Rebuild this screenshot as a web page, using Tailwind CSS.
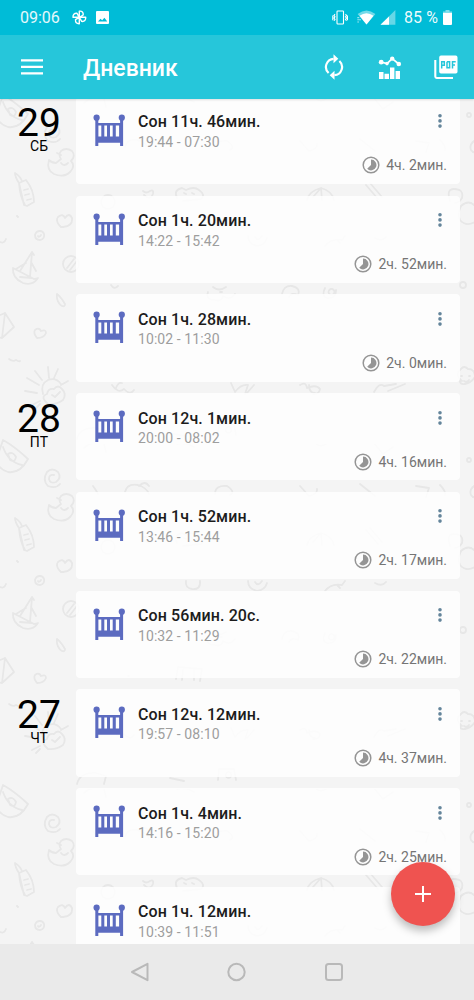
<!DOCTYPE html>
<html lang="ru">
<head>
<meta charset="utf-8">
<title>Дневник</title>
<script src="https://cdn.jsdelivr.net/npm/@tailwindcss/browser@4"></script>
</head>
<body class="w-[474px] h-[1000px] overflow-hidden bg-[#f4f4f4] font-[Roboto,sans-serif]">
<svg width="0" height="0" class="absolute">
  <defs>
    <symbol id="crib" viewBox="0 0 32 33">
      <circle cx="3.6" cy="3.7" r="3.1"/><circle cx="28.8" cy="3.7" r="3.1"/>
      <path fill-rule="evenodd" d="M2.3 5h3v4h21.8V5h3v27h-3v-3.2H5.3V32h-3zM5.4 11.6v10.8h2.9V11.6zM11.3 11.6v10.8h2.7V11.6zM17 11.6v10.8h2.7V11.6zM22.8 11.6v10.8h3.3V11.6z"/>
    </symbol>
    <symbol id="clock" viewBox="0 0 18 18">
      <circle cx="9" cy="9" r="7.8" fill="none" stroke="currentColor" stroke-width="1.5"/>
      <path d="M9 3.6A5.4 5.4 0 1 1 5.2 12.8L9 9z" fill="currentColor"/>
    </symbol>
    <symbol id="dots" viewBox="0 0 4 16"><circle cx="2" cy="2.7" r="1.8"/><circle cx="2" cy="7.9" r="1.8"/><circle cx="2" cy="13.1" r="1.8"/></symbol>
    <pattern id="doodles" width="474" height="345" patternUnits="userSpaceOnUse">
      <g fill="none" stroke="#e7e7e7" stroke-width="1.8" stroke-linecap="round" stroke-linejoin="round">
        <!-- diaper -->
        <path d="M-4 17L3 -4Q14 2 28 15Q20 30 8 28Q0 26 -4 17zM3 3Q8 18 22 21M8 10q5-3 8 3q-1 6-6 3z"/>
        <path d="M-4 362L3 341Q14 347 28 360"/>
        <!-- snail curl -->
        <path d="M54 31q-5-1-5 4q1 5 7 3q6-4 2-10q-6-5-11 0q-5 8 1 14q8 3 12-2"/>
        <!-- duck -->
        <path d="M49 61q-3 10 5 14q10 4 16-2q6-6 1-11q5-5 1-10q-6-4-11 0q-3 4 0 8l-5 4q-4 0-7-3zM61 64q3 4 7 0M57 54l4 2"/>
        <!-- bottle -->
        <path d="M19 84l7-3q8 10 8 22l-7 4l-3-1zM19 84q-4-6-4-10q5 3 7 8M19 84q1 14 6 22M24 91l4-1M25 96l4-1M27 101l4-1"/>
        <!-- heart, dot, spiral -->
        <path d="M61 128q-6-6-3-10q5-4 7 1q4-6 7 0q1 8-9 9zM17 117l1 1M40 132q-4 0-5 4q0 5 5 5q5-1 4-6q-1-3-4-3zm-2 5q1 2 3-1M0 143q4 2 6-3"/>
        <!-- boat -->
        <path d="M13 169q-1 10 10 15q10 3 15-5l-4 1l-21-11zM20 172L32 153l-2 25M16 170q8-5 10-6M31 163l5 9M32 153l2 3M20 178l12 1"/>
        <circle cx="71" cy="165" r="8"/><path d="M67 169l7-9M70 171l7-9"/>
        <path d="M57 195q4 3 8 10q0 3-3 2q-6-4-5-12zM-2 217l7-3l9 14l-12 11l-6-1M5 214l-3 25"/>
        <path d="M37 239q-4-5-2-8q4-3 6 1q5-2 5 2q-2 5-9 5zM9 260q4 3 7 1q3 2 4 1"/>
        <!-- sun and cloud -->
        <path d="M43 295q-3-10 5-14q8-3 13 4M25 292l12 2M27 279l12 7M35 272l7 9M48 268l1 11M58 270l-4 9M68 282l-7 4M32 306l8-4M36 309l4-4"/>
        <path d="M45 302q-4-5 2-7q1-6 7-5q4-5 8 0q5 5 1 11q-7 5-15 4zM52 296l3 2l5-5"/>
        <!-- animals and toys across the middle -->
        <circle cx="108" cy="103" r="7"/><path d="M143 92q3 3 7 0q4-2 3 3q-3 7-9 1M177 99q-4-8 5-10l4 2q8-4 13 0q7 5 2 9l-18 2M184 94l2 1M192 94l2 1"/>
        <path d="M307 101q2-9 14-12q11 3 13 12M313 98l8-9l1 12M366 86l12 14M370 84l12 14M450 102q-4-12 4-12q10 0 8 9q-3 5-7 5M461 107q8-7 14 0v16q-9 5-15-2q-3-6 1-14z"/>
        <path d="M111 186q3 5 7 1M208 193q-3 8 7 8q7 2 8-4q7 5 12-2M213 188q6 5 13 0M220 193h2M282 195q2-9 10-8q9 2 6 9q-7-3-9 2M325 189q-4 8 2 10q9 1 9-8M331 190a3 3 0 1 0 1 0"/>
        <path d="M112 286q6 9 12 4q6 7 10 1M116 289q2-6 6-5M231 284l4 9q6-8 13-7l-3 9M254 286l-7 8M300 286q6-4 7 3q9-4 13 1q-1 6-7 5M309 286q0 8 6 8M374 293q5-10 10-6l12-2M388 292l17-7"/>
        <path d="M462 282q-8-7-1-12q3-4 7 0q7 0 7 8q-4 6-10 7q-6 1-5-5M461 277h1M469 277h1M464 282q3 2 5-1"/>
        <circle cx="463" cy="186" r="3"/><circle cx="469" cy="16" r="2"/><path d="M474 42q-5 4-3 9q2 3 4 2M84 4q8-8 20-4l2 8M177 0q9-2 17 3M312 -5q7 11 15 4M373 -2l10 12l10-7"/>
        <path d="M93 42q3 4 5 8M125 48q2-9 13-7q9 3 11 9M139 42q6-6 10 0M215 50q0-9 12-8q9 6 3 9M300 42l9 10q9-2 8-7M360 40l15 12M416 42l13 2l-3 9M440 41q6 6 5 10"/>
        <path d="M186 137q-1 7 6 8q9 1 8-8M248 137q0 8 9 10q8-1 10-8M255 138q3 5 7-1M325 147q6-8 17-6l3-4M337 141l3 3M375 139q7 4 11-1"/>
        <path d="M176 235l2-12l24 2l-2 12M183 226l-1 10M194 226v10M128 232h1M218 336l1-11h15l2 11M228 328a3 3 0 1 0 1 0M170 334l14 3"/>
        <path d="M77 340q3-12 19-11l10 3l-2 8"/>
      </g>
    </pattern>
  </defs>
</svg>

<div class="relative flex h-[1000px] flex-col">
  <header class="relative z-20 h-[98.5px] shrink-0 bg-[#26c6da] text-white shadow-[0_1px_2px_rgba(0,0,0,0.12)]">
    <div class="flex h-[34.5px] items-center bg-[#00bcd7] pl-5 pr-5">
      <span class="w-[51px] pt-[2px] text-base leading-none text-white/90">09:06</span>
      <svg class="ml-px" width="15" height="15" viewBox="0 0 15 15" fill="none" stroke="#fff" stroke-width="1.4" stroke-linejoin="round"><path d="M7.3 7.3V1.2Q11.6.8 11.2 5L7.3 7.3M7.3 7.3h6.4q.3 4.5-4 4.1L7.3 7.3M7.3 7.3v6.4Q3.2 13.9 3.5 9.6l3.8-2.3M7.3 7.3H1Q.8 3 5 3.3l2.3 4"/></svg>
      <svg class="ml-[9px]" width="13" height="13" viewBox="0 0 13 13"><path fill="#fff" fill-rule="evenodd" d="M1 0h11q1 0 1 1v11q0 1-1 1H1q-1 0-1-1V1q0-1 1-1zM2 10.5h9.3L8.4 6.7 6.2 9.3 4.5 7.7z"/></svg>
      <div class="flex-1"></div>
      <svg width="16" height="15" viewBox="0 0 16 15" fill="none" stroke="#fff" stroke-width="1.1"><rect x="5" y="1" width="6.5" height="13" rx=".7"/><path d="M3 4.2L2 5.5l1 1.3L2 8.1l1 1.3-1 1.4M.8 5.5v4.8M13.5 4.2l1 1.3-1 1.3 1 1.3-1 1.3 1 1.4M15.5 5.5v4.8"/></svg>
      <svg class="ml-[9px]" width="19" height="15" viewBox="0 0 19 15" fill="#fff"><path opacity=".45" d="M.6 4Q9.5-3 18.4 4L9.5 14.5z"/><path d="M2.5 5.8Q9.5.5 16.5 5.8L9.5 14.5z"/><path d="M.3 7h2v1.2h-2zM.3 9.2H4v1H.3zM.3 11.4H2v1.2H.3z" opacity=".6"/></svg>
      <svg class="ml-[4px]" width="16" height="15" viewBox="0 0 16 15" fill="#fff"><path opacity=".4" d="M15.4 0v14.7H.5z"/><path d="M9 6.4v8.3H.5z"/></svg>
      <span class="ml-[8px] w-[36px] whitespace-nowrap pt-[2px] text-base leading-none tracking-[0.1px] text-white/95">85 %</span>
      <svg class="ml-[3px] mr-[2px]" width="9" height="15" viewBox="0 0 9 15" fill="#fff"><path opacity=".5" d="M2.5 0h4v1.5H9V4H0V1.5h2.5z"/><path d="M0 3h9v11q0 1-1 1H1q-1 0-1-1z"/></svg>
    </div>
    <div class="flex h-[64px] items-center pl-[21px] pr-[16px]">
      <svg class="mt-px" width="22" height="16" viewBox="0 0 22 16" fill="#fff"><path d="M0 .3h22v2.1H0zM0 6.8h22v2.1H0zM0 13.3h22v2.1H0z"/></svg>
      <h1 class="ml-[40px] flex-1 pt-[4px] text-[23px] font-medium leading-none">Дневник</h1>
      <svg class="mt-px" width="20" height="26" viewBox="0 0 20 26"><path fill="none" stroke="#fff" stroke-width="2.2" d="M4.6 19A8.2 8.2 0 0 1 9.6 4.8M15.4 7A8.2 8.2 0 0 1 10.4 21.2"/><path fill="#fff" d="M9.5.3v9l4.8-4.5zM10.5 16.7v9l-4.8-4.5z"/></svg>
      <svg class="ml-[34px] mt-px" width="24" height="25" viewBox="0 0 24 25" fill="#fff"><path d="M1 17h4.5v7H1zM6.5 18.8h4.5v5.2H6.5zM12 12.5h4.4V24H12zM17.6 16h4.4v8h-4.4z"/><circle cx="3.2" cy="7.2" r="2.4"/><circle cx="9" cy="8.6" r="1.8"/><circle cx="14.2" cy="3.6" r="2.2"/><circle cx="20.8" cy="9" r="2.3"/><path fill="none" stroke="#fff" stroke-width="1.7" d="M3.2 7.2L9 8.6l5.2-5L20.8 9"/></svg>
      <svg class="ml-[32px] mt-px" width="24" height="25" viewBox="0 0 24 25"><path fill="#fff" fill-rule="evenodd" d="M7 .6h14.7q1.8 0 1.8 1.8v14.3q0 1.8-1.8 1.8H7q-1.8 0-1.8-1.8V2.4Q5.2.6 7 .6z"/><path fill="none" stroke="#fff" stroke-width="2.1" d="M1.3 5v16.6q0 1.4 1.4 1.4H19"/><path fill="none" stroke="#26c6da" stroke-width="1.5" d="M7.7 13.5V6.8h2.6v3.4H7.7M13 6.8v5.9h2.6V6.8H13M18.5 13.5V6.8h3.2M18.5 10h2.5"/></svg>
    </div>
  </header>

  <main class="relative flex-1 overflow-hidden">
    <svg class="absolute inset-0" width="474" height="846"><rect width="474" height="846" fill="url(#doodles)"/></svg>
    <div id="list" class="relative -mt-[1.6px] flex flex-col gap-[11.45px]"></div>
  </main>

  <nav class="z-10 flex h-[56px] shrink-0 items-center bg-[#eaeaea] px-[130px] text-[#b9b9b9]">
    <svg width="20" height="20" viewBox="0 0 20 20" fill="none" stroke="currentColor" stroke-width="2" stroke-linejoin="round"><path d="M17.5 1.8v16.4L2 10z"/></svg>
    <svg class="ml-[77px]" width="20" height="20" viewBox="0 0 20 20" fill="none" stroke="currentColor" stroke-width="2"><circle cx="9.5" cy="10" r="8.2"/></svg>
    <svg class="ml-[77px]" width="20" height="20" viewBox="0 0 20 20" fill="none" stroke="currentColor" stroke-width="2"><rect x="2" y="2" width="16" height="16" rx="2.5"/></svg>
  </nav>

  <button class="absolute left-[391px] top-[862px] z-20 flex h-16 w-16 items-center justify-center rounded-full bg-[#ef5350] shadow-[0_5px_8px_rgba(0,0,0,0.26)]">
    <svg width="18" height="18" viewBox="0 0 18 18"><path stroke="#fff" stroke-width="2" d="M9 1v16M1 9h16"/></svg>
  </button>
</div>

<template id="group">
  <section class="flex">
    <div class="flex w-[76px] flex-col items-center pl-[2px] pt-[10px]">
      <span data-day class="text-[39px] leading-[33px] text-black"></span>
      <span data-week class="-mt-px text-sm leading-[14px] text-black"></span>
    </div>
    <div data-cards class="flex flex-col gap-[11.45px]"></div>
  </section>
</template>
<template id="card">
  <article class="relative flex h-[87.3px] w-[384px] rounded-[4px] bg-white/85 pl-[17px] shadow-[0_0_1px_rgba(0,0,0,0.03)]">
    <svg class="mt-[17px] text-[#5c6bc0]" width="32" height="33" fill="currentColor"><use href="#crib"/></svg>
    <div class="ml-[13px] flex-1 pt-[15.5px]">
      <h2 data-title class="text-base font-medium leading-[20px] tracking-[0.1px] text-[#1c1c1c]"></h2>
      <p data-time class="mt-[0.5px] text-sm leading-[18px] tracking-[0.08px] text-[#9e9e9e]"></p>
    </div>
    <div class="flex w-[140px] flex-col items-end pr-[13px]">
      <svg class="mr-[5px] mt-[16.5px] text-[#64859b]" width="4" height="16" fill="currentColor"><use href="#dots"/></svg>
      <div class="mt-[27px] flex items-center gap-[6px]">
        <svg class="text-[#959595]" width="18" height="18"><use href="#clock"/></svg>
        <span data-gap class="text-sm leading-[18px] text-[#757575]"></span>
      </div>
    </div>
  </article>
</template>
<script>
const days = [
  ["29","СБ",[["Сон 11ч. 46мин.","19:44 - 07:30","4ч. 2мин."],["Сон 1ч. 20мин.","14:22 - 15:42","2ч. 52мин."],["Сон 1ч. 28мин.","10:02 - 11:30","2ч. 0мин."]]],
  ["28","ПТ",[["Сон 12ч. 1мин.","20:00 - 08:02","4ч. 16мин."],["Сон 1ч. 52мин.","13:46 - 15:44","2ч. 17мин."],["Сон 56мин. 20с.","10:32 - 11:29","2ч. 22мин."]]],
  ["27","ЧТ",[["Сон 12ч. 12мин.","19:57 - 08:10","4ч. 37мин."],["Сон 1ч. 4мин.","14:16 - 15:20","2ч. 25мин."],["Сон 1ч. 12мин.","10:39 - 11:51",""]]]
];
const list = document.getElementById("list");
for (const [day, week, items] of days) {
  const g = document.getElementById("group").content.cloneNode(true);
  g.querySelector("[data-day]").textContent = day;
  g.querySelector("[data-week]").textContent = week;
  for (const [title, time, gap] of items) {
    const c = document.getElementById("card").content.cloneNode(true);
    c.querySelector("[data-title]").textContent = title;
    c.querySelector("[data-time]").textContent = time;
    if (gap) c.querySelector("[data-gap]").textContent = gap;
    else {
      c.querySelector("[data-gap]").parentNode.remove();
      c.querySelector('use[href="#dots"]').parentNode.remove();
    }
    g.querySelector("[data-cards]").append(c);
  }
  list.append(g);
}
</script>
</body>
</html>
